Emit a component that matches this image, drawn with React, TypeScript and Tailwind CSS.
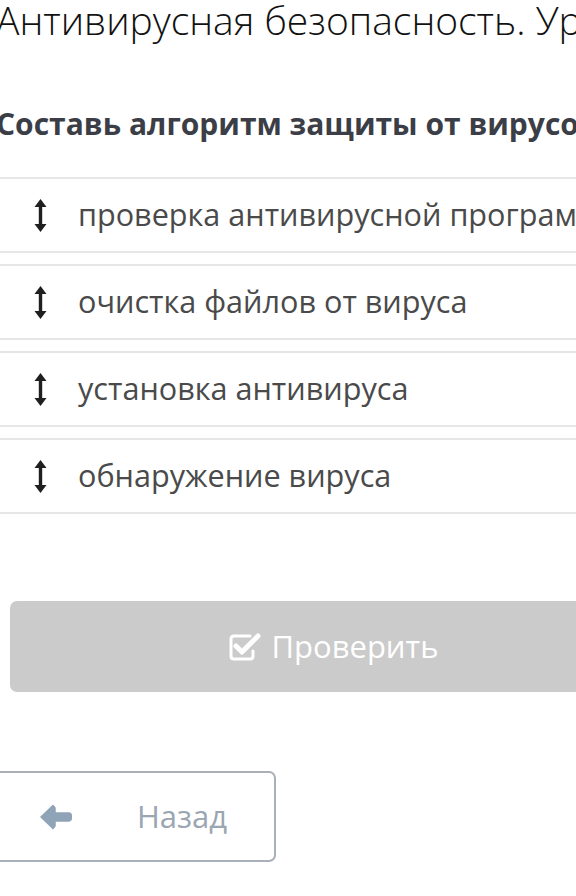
const steps = [
  "проверка антивирусной программы",
  "очистка файлов от вируса",
  "установка антивируса",
  "обнаружение вируса",
];

function UpDown() {
  return (
    <svg width="13" height="33" viewBox="0 0 13 33" className="shrink-0">
      <path d="M6.5 0 L12.5 8 L8.2 8 L8.2 25 L12.5 25 L6.5 33 L0.5 25 L4.8 25 L4.8 8 L0.5 8 Z" fill="#1f1f1f" />
    </svg>
  );
}

function CheckSquare() {
  return (
    <svg width="33" height="30" viewBox="0 0 33 30" className="shrink-0">
      <path
        d="M22 4 H6 Q3 4 3 7 V24 Q3 27 6 27 H22 Q25 27 25 24 V19"
        fill="none"
        stroke="white"
        strokeWidth="3"
        strokeLinecap="round"
      />
      <path
        d="M8 14 L14 20 L30 4"
        fill="none"
        stroke="white"
        strokeWidth="5"
        strokeLinecap="round"
        strokeLinejoin="round"
      />
    </svg>
  );
}

function BackArrow() {
  return (
    <svg width="32" height="26" viewBox="0 0 32 26" className="shrink-0">
      <path
        d="M1 13 L13 1.5 L15 4 L15 9 L29 9 Q31.5 9 31.5 13 Q31.5 17 29 17 L15 17 L15 22 L13 24.5 Z"
        fill="#8fa4b7"
        stroke="#8fa4b7"
        strokeWidth="1.5"
        strokeLinejoin="round"
      />
    </svg>
  );
}

export default function App() {
  return (
    <div
      className="w-[576px] h-[896px] overflow-hidden bg-white"
      style={{ fontFamily: "'Open Sans', 'Noto Sans', sans-serif" }}
    >
      <div className="-ml-[4px] w-[720px]">
        <h1 className="text-[39px] leading-[46px] font-light text-[#111] whitespace-nowrap -mt-[3px]">
          Антивирусная безопасность. Урок 3
        </h1>

        <h2 className="mt-[63px] text-[30px] leading-[36px] font-bold text-[#3b3e46] whitespace-nowrap">
          Составь алгоритм защиты от вирусов
        </h2>

        <div className="mt-[35px] -ml-[10px] flex flex-col gap-[11px]">
          {steps.map((s) => (
            <div
              key={s}
              className="h-[76px] border-y-2 border-[#e6e6e6] flex items-center pl-[48px] gap-[31px]"
            >
              <UpDown />
              <span className="text-[30.6px] text-[#4a4a4a] whitespace-nowrap">{s}</span>
            </div>
          ))}
        </div>

        <div className="mt-[87px] ml-[14px] w-[646px] h-[91px] rounded-[7px] bg-[#cbcbcb] flex items-center justify-center gap-[11px] text-white">
          <CheckSquare />
          <span className="text-[31px]">Проверить</span>
        </div>

        <div className="mt-[79px] -ml-[2px] w-[282px] h-[91px] rounded-[7px] border-2 border-[#a9b0b7] flex items-center pl-[44px] gap-[65px]">
          <BackArrow />
          <span className="text-[31px] text-[#9aa6b2]">Назад</span>
        </div>
      </div>
    </div>
  );
}
